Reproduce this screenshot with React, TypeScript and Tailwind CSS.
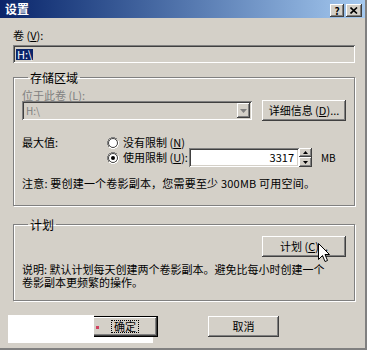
import React from "react";

const raised =
  "bg-[#d4d0c8] shadow-[inset_-1px_-1px_0_#404040,inset_1px_1px_0_#ffffff,inset_-2px_-2px_0_#808080,inset_2px_2px_0_#d4d0c8]";
const sunken =
  "shadow-[inset_1px_1px_0_#808080,inset_-1px_-1px_0_#ffffff,inset_2px_2px_0_#404040,inset_-2px_-2px_0_#d4d0c8]";
const groupBox =
  "min-w-0 border border-[#808080] shadow-[inset_1px_1px_0_#ffffff,1px_1px_0_#ffffff]";

function U({ children }: { children: React.ReactNode }) {
  return <span className="underline underline-offset-[1px]">{children}</span>;
}

function Radio({ checked }: { checked?: boolean }) {
  return (
    <span className="relative inline-block w-[12px] h-[12px] shrink-0">
      <svg width="12" height="12" viewBox="0 0 12 12" className="block">
        <path d="M4 0.5h4M2 1.5h2M8 1.5h2M1.5 2v2M0.5 4v4M1.5 8v2" stroke="#808080" strokeWidth="1" />
        <circle cx="6" cy="6" r="4.5" fill="#ffffff" stroke="#404040" strokeWidth="1" />
        <path d="M10.5 8v2M11.5 4v4M2 10.5h2M8 10.5h2M4 11.5h4" stroke="#ffffff" strokeWidth="1" />
        {checked && <circle cx="6" cy="6" r="2" fill="#000000" />}
      </svg>
    </span>
  );
}

export default function App() {
  return (
    <div
      className="relative w-[367px] h-[350px] bg-[#d4d0c8] border-r-2 border-b-2 border-[#808080] overflow-hidden flex flex-col text-[11px] text-black"
      style={{ fontFamily: '"Noto Sans CJK SC", "DejaVu Sans", sans-serif' }}
    >
      {/* Title bar */}
      <div className="h-[18px] flex items-center bg-gradient-to-r from-[#0a246a] to-[#a6caf0] pl-[5px] pr-[3px]">
        <span className="text-white font-bold text-[12px] leading-[12px]">设置</span>
        <div className="ml-auto flex gap-[2px] mt-[3px]">
          <div className={`${raised} w-[14px] h-[13px] flex items-center justify-center text-[10px] font-bold leading-none`}>
            ?
          </div>
          <div className={`${raised} w-[16px] h-[13px] flex items-center justify-center`}>
            <svg width="8" height="7" viewBox="0 0 8 7">
              <path d="M0.5 0.5L7 6.5M7 0.5L0.5 6.5" stroke="#000" strokeWidth="1.6" />
            </svg>
          </div>
        </div>
      </div>

      {/* Content */}
      <div className="flex flex-col pl-[13px] pr-[10px]">
        <div className="mt-[11px] h-[13px] leading-[13px]">
          卷 (<U>V</U>):
        </div>
        <div className={`${sunken} mt-[3px] h-[18px] flex items-center pl-[3px]`}>
          <span className="bg-[#0a246a] text-white px-[1px] leading-[11px] h-[11px]">H:\</span>
        </div>

        {/* Storage group */}
        <fieldset className={`${groupBox} mt-[8px] pl-[8px] pr-[8px] pb-[16px]`}>
          <legend className="ml-[6px] px-[2px] h-[13px] leading-[13px] text-[12px]">存储区域</legend>
          <div className="pt-[6px] h-[16px] leading-[10px] text-[#808080]">
            位于此卷 (<U>L</U>):
          </div>
          <div className="flex items-center h-[21px]">
            <div className={`${sunken} w-[230px] h-[19px] flex items-center pl-[4px] pr-[2px] text-[#808080]`}>
              <span className="text-[10px]">H:\</span>
              <div className={`${raised} ml-auto w-[13px] h-[15px] flex items-center justify-center`}>
                <svg width="7" height="4" viewBox="0 0 7 4">
                  <path d="M0 0h7L3.5 4z" fill="#808080" />
                </svg>
              </div>
            </div>
            <div className={`${raised} ml-auto w-[84px] h-[21px] flex items-center justify-center`}>
              详细信息 (<U>D</U>)...
            </div>
          </div>

          <div className="mt-[16px] flex">
            <div className="w-[85px] leading-[12px] mt-[-1px]">最大值:</div>
            <div className="flex flex-col">
              <div className="h-[11px] flex items-center">
                <Radio />
                <span className="ml-[4px]">
                  没有限制 (<U>N</U>)
                </span>
              </div>
              <div className="h-[19px] flex items-center">
                <Radio checked />
                <span className="ml-[4px] w-[66px]">
                  使用限制 (<U>U</U>):
                </span>
                <div className={`${sunken} bg-white w-[110px] h-[19px] flex items-center justify-end pr-[5px]`}>
                  3317
                </div>
                <div className="flex flex-col w-[13px] h-[19px]">
                  <div className={`${raised} h-[9px] flex items-center justify-center`}>
                    <svg width="5" height="3" viewBox="0 0 5 3">
                      <path d="M2.5 0L5 3H0z" fill="#000" />
                    </svg>
                  </div>
                  <div className={`${raised} h-[10px] flex items-center justify-center`}>
                    <svg width="5" height="3" viewBox="0 0 5 3">
                      <path d="M0 0h5L2.5 3z" fill="#000" />
                    </svg>
                  </div>
                </div>
                <span className="ml-[9px] text-[10px]">MB</span>
              </div>
            </div>
          </div>

          <div className="mt-[10px] h-[12px] leading-[12px] whitespace-nowrap tracking-[0.2px]">
            注意: 要创建一个卷影副本，您需要至少 300MB 可用空间。
          </div>
        </fieldset>

        {/* Schedule group */}
        <fieldset className={`${groupBox} mt-[12px] pl-[8px] pr-[8px] pb-[11px] flex flex-col`}>
          <legend className="ml-[6px] px-[2px] h-[13px] leading-[13px] text-[12px]">计划</legend>
          <div className={`${raised} mt-[5px] self-end w-[84px] h-[21px] flex items-center justify-center`}>
            计划 (<U>C</U>)...
          </div>
          <div className="mt-[6px] flex flex-col whitespace-nowrap">
            <div className="h-[13px] leading-[13px]">说明: 默认计划每天创建两个卷影副本。避免比每小时创建一个</div>
            <div className="h-[13px] leading-[13px]">卷影副本更频繁的操作。</div>
          </div>
        </fieldset>

        {/* Buttons */}
        <div className="mt-[15px] flex justify-center gap-[50px] pr-[3px]">
          <div className="w-[72px] h-[21px] border border-black">
            <div className={`${raised} w-full h-full flex items-center justify-center pl-[6px]`}>
              <span className="outline outline-1 outline-dotted outline-black px-[2px] leading-[11px]">确定</span>
            </div>
          </div>
          <div className={`${raised} w-[71px] h-[21px] flex items-center justify-center`}>取消</div>
        </div>
      </div>

      {/* White patch over the bottom-left */}
      <div className="absolute left-[8px] top-[315px] w-[86px] h-[28px] bg-white" />
      <div className="absolute left-[94px] top-[337px] w-[59px] h-[6px] bg-white" />
      <div className="absolute left-[96px] top-[326px] w-[3px] h-[3px] bg-[#d04060]" />

      {/* Mouse cursor */}
      <svg className="absolute left-[318px] top-[243px]" width="12" height="20" viewBox="0 0 12 20">
        <path
          d="M0.5 0.5V16.5L4.5 12.5L7 18.5L9.5 17.5L7 11.5H11.5Z"
          fill="#ffffff"
          stroke="#000000"
          strokeWidth="1"
          strokeLinejoin="miter"
        />
      </svg>
    </div>
  );
}
